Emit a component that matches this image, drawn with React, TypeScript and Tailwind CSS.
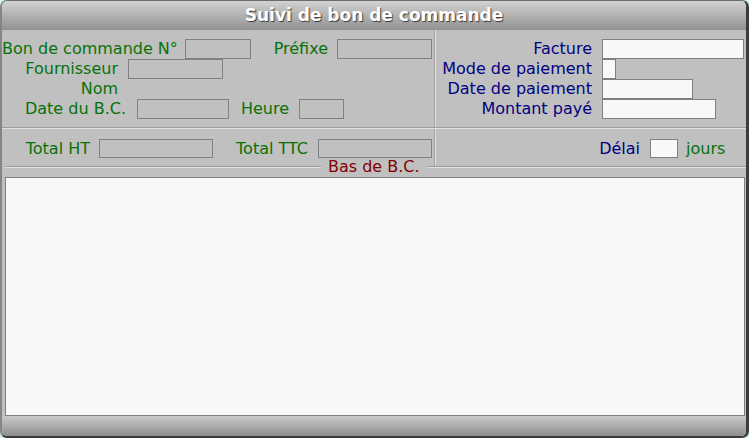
const FONT = { fontFamily: '"DejaVu Sans", Verdana, sans-serif' };

function Field({ w, light = false, h = "h-[20px]" }: { w: string; light?: boolean; h?: string }) {
  return (
    <div
      className={`${w} ${h} shrink-0 border border-[#808080] ${light ? "bg-[#f8f8f8]" : "bg-[#c0c0c0]"}`}
    />
  );
}

function Label({ w, text, color = "green" }: { w: string; text: string; color?: "green" | "navy" }) {
  return (
    <div
      className={`${w} shrink-0 whitespace-nowrap text-right leading-none ${
        color === "green" ? "text-[#077207]" : "text-[#000080]"
      }`}
    >
      {text}
    </div>
  );
}

export default function App() {
  return (
    <div className="h-[438px] w-[749px] bg-[#d6eeee] text-[16px]" style={FONT}>
      <div className="flex h-full flex-col overflow-hidden rounded-[7px] border-t border-l-2 border-r-[3px] border-b-2 border-t-[#6c6c6c] border-l-[#858585] border-r-[#3c3c3c] border-b-[#3c3c3c]">
        {/* title */}
        <div className="flex h-[29px] shrink-0 items-center justify-center bg-gradient-to-b from-[#d2d2d2] to-[#929292]">
          <span className="text-[17px] font-bold text-white [text-shadow:1px_1px_1px_#3a3a3a]">
            Suivi de bon de commande
          </span>
        </div>

        <div className="flex flex-1 flex-col bg-[#c0c0c0]">
          {/* top section */}
          <div className="flex h-[97px] shrink-0">
            <div className="flex w-[432px] flex-col pt-[9px]">
              <div className="flex h-[20px] items-center">
                <Label w="w-[174px]" text="Bon de commande N°" />
                <div className="ml-[9px]"><Field w="w-[66px]" /></div>
                <Label w="w-[77px]" text="Préfixe" />
                <div className="ml-[9px]"><Field w="w-[95px]" /></div>
              </div>
              <div className="flex h-[20px] items-center">
                <Label w="w-[116px]" text="Fournisseur" />
                <div className="ml-[10px]"><Field w="w-[95px]" /></div>
              </div>
              <div className="flex h-[20px] items-center">
                <Label w="w-[116px]" text="Nom" />
              </div>
              <div className="flex h-[20px] items-center">
                <Label w="w-[124px]" text="Date du B.C." />
                <div className="ml-[11px]"><Field w="w-[92px]" /></div>
                <Label w="w-[60px]" text="Heure" />
                <div className="ml-[10px]"><Field w="w-[45px]" /></div>
              </div>
            </div>
            <div className="w-[2px] shrink-0 border-l border-r border-l-[#a0a0a0] border-r-[#e2e2e2]" />
            <div className="flex flex-1 flex-col pt-[9px]">
              <div className="flex h-[20px] items-center">
                <Label w="w-[156px]" text="Facture" color="navy" />
                <div className="ml-[10px]"><Field w="w-[142px]" light /></div>
              </div>
              <div className="flex h-[20px] items-center">
                <Label w="w-[156px]" text="Mode de paiement" color="navy" />
                <div className="ml-[10px]"><Field w="w-[14px]" light /></div>
              </div>
              <div className="flex h-[20px] items-center">
                <Label w="w-[156px]" text="Date de paiement" color="navy" />
                <div className="ml-[10px]"><Field w="w-[91px]" light /></div>
              </div>
              <div className="flex h-[20px] items-center">
                <Label w="w-[156px]" text="Montant payé" color="navy" />
                <div className="ml-[10px]"><Field w="w-[114px]" light /></div>
              </div>
            </div>
          </div>

          <div className="h-[2px] shrink-0 border-t border-b border-t-[#9c9c9c] border-b-[#e2e2e2]" />

          {/* totals */}
          <div className="flex h-[37px] shrink-0">
            <div className="flex w-[432px] items-start pt-[10px]">
              <div className="flex h-[19px] items-center">
                <Label w="w-[88px]" text="Total HT" />
                <div className="ml-[9px]"><Field w="w-[114px]" h="h-[19px]" /></div>
                <Label w="w-[95px]" text="Total TTC" />
                <div className="ml-[10px]"><Field w="w-[114px]" h="h-[19px]" /></div>
              </div>
            </div>
            <div className="w-[2px] shrink-0 border-l border-r border-l-[#a0a0a0] border-r-[#e2e2e2]" />
            <div className="flex flex-1 items-start pt-[10px]">
              <div className="flex h-[19px] items-center">
                <Label w="w-[204px]" text="Délai" color="navy" />
                <div className="ml-[10px]"><Field w="w-[28px]" h="h-[19px]" light /></div>
                <span className="ml-[8px] leading-none text-[#077207]">jours</span>
              </div>
            </div>
          </div>

          {/* legend line */}
          <div className="flex h-[2px] shrink-0 items-center">
            <div className="ml-[3px] h-[2px] w-[316px] border-t border-b border-t-[#9c9c9c] border-b-[#e2e2e2]" />
            <span className="mx-[7px] whitespace-nowrap leading-none text-[#800000]">Bas de B.C.</span>
            <div className="h-[2px] flex-1 border-t border-b border-t-[#9c9c9c] border-b-[#e2e2e2]" />
          </div>

          <div className="mx-[3px] mr-[1px] mt-[9px] mb-0 flex-1 border border-[#808080] bg-[#f8f8f8]" />
        </div>

        {/* bottom bar */}
        <div className="h-[20px] shrink-0 bg-gradient-to-b from-[#cacaca] to-[#8e8e8e]" />
      </div>
    </div>
  );
}
